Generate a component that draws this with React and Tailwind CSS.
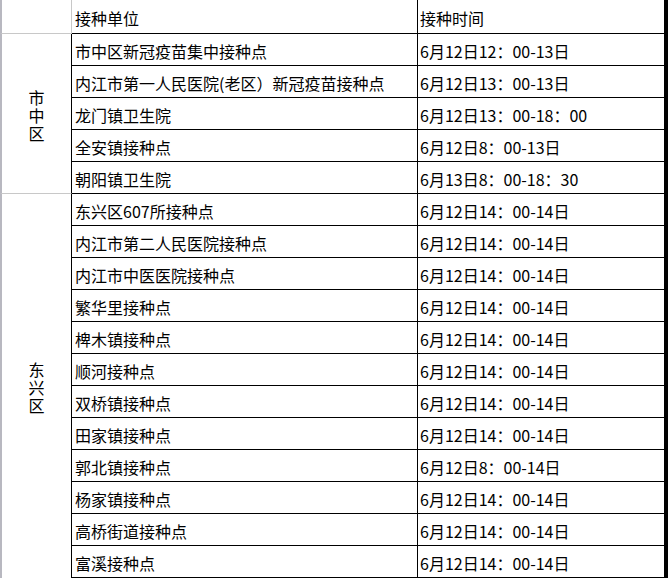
import React from 'react';

const sections = [
  {
    name: '市中区',
    rows: [
      ['市中区新冠疫苗集中接种点', '6月12日12：00-13日'],
      ['内江市第一人民医院(老区）新冠疫苗接种点', '6月12日13：00-13日'],
      ['龙门镇卫生院', '6月12日13：00-18：00'],
      ['全安镇接种点', '6月12日8：00-13日'],
      ['朝阳镇卫生院', '6月13日8：00-18：30'],
    ],
  },
  {
    name: '东兴区',
    rows: [
      ['东兴区607所接种点', '6月12日14：00-14日'],
      ['内江市第二人民医院接种点', '6月12日14：00-14日'],
      ['内江市中医医院接种点', '6月12日14：00-14日'],
      ['繁华里接种点', '6月12日14：00-14日'],
      ['椑木镇接种点', '6月12日14：00-14日'],
      ['顺河接种点', '6月12日14：00-14日'],
      ['双桥镇接种点', '6月12日14：00-14日'],
      ['田家镇接种点', '6月12日14：00-14日'],
      ['郭北镇接种点', '6月12日8：00-14日'],
      ['杨家镇接种点', '6月12日14：00-14日'],
      ['高桥街道接种点', '6月12日14：00-14日'],
      ['富溪接种点', '6月12日14：00-14日'],
    ],
  },
];

const Row = ({ unit, time }) => (
  <div className="flex h-[32px] border-b border-black">
    <div className="w-[346px] border-r border-black pl-[3px] pt-[3px] flex items-center whitespace-nowrap">
      {unit}
    </div>
    <div className="flex-1 pl-[2px] pt-[3px] flex items-center whitespace-nowrap">{time}</div>
  </div>
);

const App = () => {
  return (
    <div
      className="w-[668px] h-[578px] overflow-hidden bg-white text-black text-[16px] leading-none border-r-4 border-black"
      style={{ fontFamily: '"Noto Sans CJK SC", "Noto Sans", sans-serif' }}
    >
      {/* header */}
      <div className="flex h-[34px]">
        <div className="w-[72px] border-l-2 border-[#b8b8c0] border-b border-b-[#c8c8c8] border-r border-r-[#c8c8c8]" />
        <div className="w-[346px] border-b border-r border-black pl-[3px] pt-[3px] flex items-center">接种单位</div>
        <div className="flex-1 border-b border-black pl-[2px] pt-[3px] flex items-center">接种时间</div>
      </div>

      {sections.map((s, i) => (
        <div key={s.name} className="flex">
          <div
            className={
              'w-[72px] border-l-2 border-[#b8b8c0] border-r border-r-black flex items-center justify-center ' +
              (i === 0 ? 'border-b border-b-[#c8c8c8]' : '')
            }
          >
            <div className="flex flex-col items-center leading-[18px] pt-[2px]">
              {s.name.split('').map((c) => (
                <span key={c}>{c}</span>
              ))}
            </div>
          </div>
          <div className="flex-1 flex flex-col">
            {s.rows.map(([unit, time], j) => (
              <Row key={j} unit={unit} time={time} />
            ))}
          </div>
        </div>
      ))}
    </div>
  );
};

export default App;
